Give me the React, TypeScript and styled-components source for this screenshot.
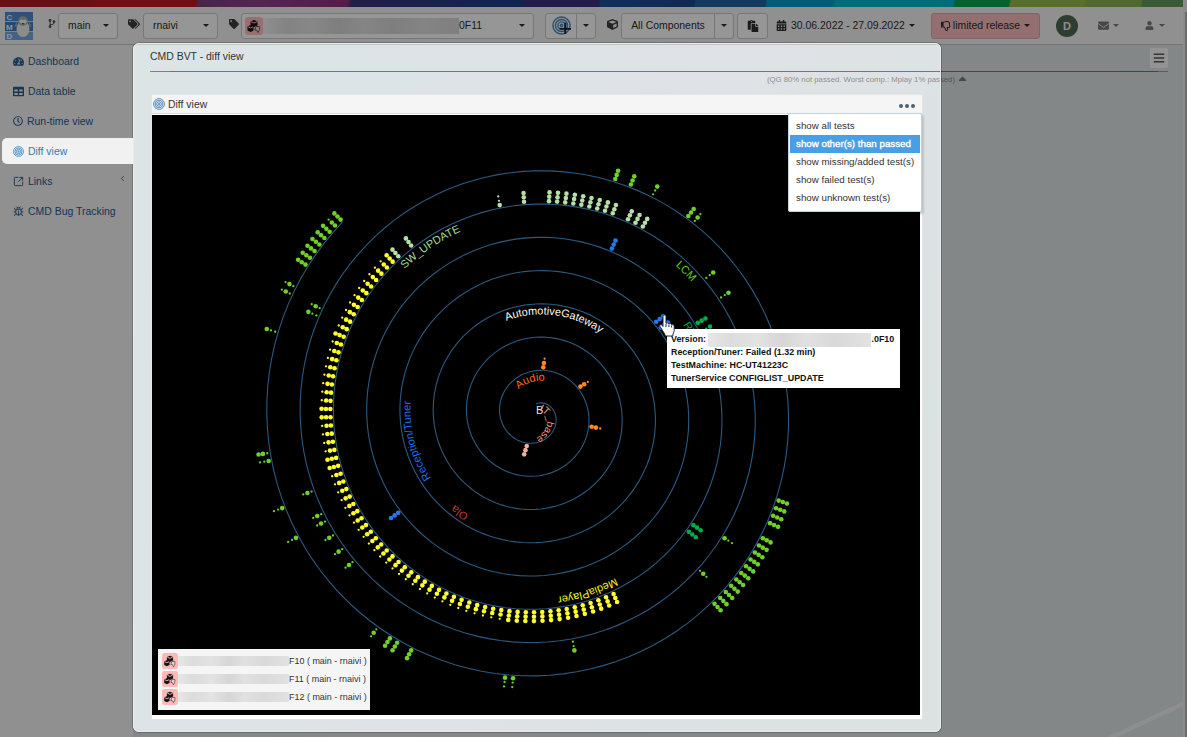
import React from 'react';
import styled, { createGlobalStyle, css } from 'styled-components';
import {
  FaBars,
  FaCalendarAlt,
  FaCaretDown,
  FaCaretUp,
  FaCodeBranch,
  FaCube,
  FaEnvelope,
  FaPaste,
  FaRegClock,
  FaRegThumbsDown,
  FaTable,
  FaTachometerAlt,
  FaTag,
  FaTags,
  FaUser,
} from 'react-icons/fa';
import { Bug, ChevronLeft, SquareArrowOutUpRight } from 'lucide-react';

const Global = createGlobalStyle`
  html, body { margin: 0; padding: 0; }
  body { font-family: "Liberation Sans", Arial, sans-serif; font-size: 10.45px; color: #333; overflow: hidden; }
  *, *::before, *::after { box-sizing: border-box; }
`;

const Page = styled.div`
  position: relative;
  display: flex;
  width: 1187px;
  height: 737px;
  overflow: hidden;
  background: #f0f0f0;
`;

const Screen = styled.div`
  display: flex;
  flex-direction: column;
  width: 1183px;
`;

const Strip = styled.div`
  flex: 0 0 7px;
  background: linear-gradient(
    100deg,
    #b01c25 0 92px, #c0161d 92px 193px, #7a3a78 196px, #8c3f8b 250px, #8c2f7a 343px,
    #3a3278 346px, #1a3f88 515px, #38307c 516px 590px, #1c4f9c 592px, #194886 684px,
    #1f639c 686px 754px, #009cc6 756px 821px, #00b4c8 823px 930px, #00b2dc 939px,
    #00a44c 941px 994px, #93b84a 996px 1068px, #85b053 1070px 1124px, #60945c 1126px
  );
`;

const Header = styled.header`
  display: flex;
  align-items: center;
  flex: 0 0 38px;
  padding-left: 5px;
  border-bottom: 1px solid #c4c4c4;
  background: #f0f0f0;
`;

const HeaderIcon = styled.span<{ $w: number; $ml?: number; $up?: number }>`
  display: flex;
  width: ${(p) => p.$w}px;
  margin-left: ${(p) => p.$ml ?? 0}px;
  padding-bottom: ${(p) => p.$up ?? 4}px;
  flex: none;
  color: #3c3c3c;
`;

const Button = styled.div<{ $w: number; $ml?: number; $tone?: 'danger' }>`
  display: flex;
  align-items: center;
  justify-content: space-between;
  flex: none;
  width: ${(p) => p.$w}px;
  height: 26px;
  margin-left: ${(p) => p.$ml ?? 0}px;
  padding: 0 8px 0 9px;
  border: 1px solid #c6c6c6;
  border-radius: 3px;
  color: #2c2c2c;
  background: #fbfbfb;
  white-space: nowrap;
  ${(p) =>
    p.$tone === 'danger' &&
    css`
      background: #f7b9b9;
      border-color: #cfa9a9;
      justify-content: center;
      gap: 2px;
      padding: 0;
    `}
`;

const SplitMain = styled.span<{ $w: number }>`
  display: flex;
  align-items: center;
  justify-content: center;
  width: ${(p) => p.$w}px;
  height: 24px;
  border-right: 1px solid #c6c6c6;
`;

const SplitButton = styled(Button)`
  padding: 0;
`;

const SplitCaret = styled.span`
  display: flex;
  flex: 1;
  justify-content: center;
`;

const Caret = styled.i`
  width: 0;
  height: 0;
  border: 3px solid transparent;
  border-top-color: currentColor;
  border-bottom: 0;
`;

const Smudge = styled.span<{ $w: number; $h: number; $dark?: boolean }>`
  flex: none;
  width: ${(p) => p.$w}px;
  height: ${(p) => p.$h}px;
  background: ${(p) =>
    p.$dark
      ? 'linear-gradient(90deg, #efefef, #dadada 12%, #e2e2e2 25%, #d2d2d2 38%, #dedede 52%, #d3d3d3 66%, #dcdcdc 82%, #d4d4d4)'
      : 'linear-gradient(90deg, #e6e6e6, #dcdcdc 14%, #e3e3e3 30%, #d6d6d6 46%, #e1e1e1 60%, #d9d9d9 78%, #e2e2e2)'};
`;

const VersionName = styled.span`
  display: flex;
  align-items: center;
  flex: 1;
  gap: 0;
`;

const DateRange = styled.div`
  display: flex;
  align-items: center;
  gap: 4px;
  margin-left: 8px;
  flex: none;
  width: 139px;
  color: #2c2c2c;
  white-space: nowrap;
`;

const Avatar = styled.div`
  display: flex;
  align-items: center;
  justify-content: center;
  flex: none;
  width: 22px;
  height: 22px;
  margin-left: 16px;
  border-radius: 50%;
  color: #e9e9e9;
  background: #4c6650;
  font-weight: bold;
  font-size: 11px;
`;

const UserTool = styled.div<{ $ml: number }>`
  display: flex;
  align-items: center;
  gap: 4px;
  margin-left: ${(p) => p.$ml}px;
  padding-bottom: 1px;
  color: #777;
`;

const Body = styled.div`
  display: flex;
  flex: 1;
  min-height: 0;
`;

const Sidebar = styled.nav`
  display: flex;
  flex-direction: column;
  flex: 0 0 133px;
  padding-top: 1px;
`;

const NavItem = styled.div<{ $active?: boolean }>`
  display: flex;
  align-items: center;
  height: 26px;
  margin: 2px 0 2px 2px;
  padding-left: 11px;
  gap: 4px;
  color: #245a8c;
  white-space: nowrap;
  svg { flex: none; }
  ${(p) =>
    p.$active &&
    css`
      position: relative;
      z-index: 5;
      color: #337ab7;
      background: #f1f1f1;
      border-radius: 5px 0 0 5px;
    `}
`;

const NavArrow = styled.span`
  display: flex;
  margin: 0 6px 5px auto;
`;

const Main = styled.main`
  flex: 1;
  min-width: 0;
  padding: 0 15px 0 17px;
  background:
    linear-gradient(155deg, transparent 97%, #e9edee 97% 97.4%, transparent 97.4%),
    linear-gradient(115deg, #dce4e6 0%, #dde3e6 30%, #dfe2e6 45%, #dbe2e2 70%, #dde2e3 100%);
`;

const TitleRow = styled.div`
  display: flex;
  align-items: flex-start;
  justify-content: space-between;
  height: 26px;
  padding-top: 3px;
`;

const Title = styled.h1`
  margin: 2px 0 0;
  font-size: 10.45px;
  line-height: 13px;
  font-weight: normal;
`;

const MenuButton = styled.div`
  display: flex;
  align-items: center;
  justify-content: center;
  width: 18px;
  height: 20px;
  border-radius: 2px;
  background: #f6f6f6;
  color: #555;
`;

const Gate = styled.div`
  display: flex;
  height: 1px;
  background: #999;
`;

const GatePart = styled.span<{ $w: number; $c: string }>`
  width: ${(p) => p.$w}px;
  background: ${(p) => p.$c};
`;

const GateNote = styled.div`
  display: flex;
  align-items: flex-start;
  justify-content: flex-end;
  width: 819px;
  height: 22px;
  gap: 1px;
  color: #8c8f91;
  font-size: 7.75px;
  line-height: 15px;
  white-space: nowrap;
  svg { color: #777; }
`;

const Card = styled.section`
  display: flex;
  flex-direction: column;
  width: 772px;
  height: 626px;
  margin-left: 1px;
  background: #fff;
  border: 1px solid #e4e6e6;
  border-radius: 2px;
`;

const CardHead = styled.div`
  position: relative;
  display: flex;
  align-items: center;
  gap: 3px;
  flex: 0 0 19px;
  padding: 0 7px 0 1px;
  border-bottom: 1px solid #ddd;
  background: #f5f5f5;
`;

const Dots = styled.span`
  display: flex;
  gap: 2px;
  margin: 3px 0 0 auto;
  i { width: 4px; height: 4px; border-radius: 50%; background: #4d6070; }
`;

const Plot = styled.div`
  position: relative;
  width: 768px;
  height: 600px;
  margin-top: 1px;
  background: #000;
  > svg { display: block; }
`;

const Menu = styled.div`
  position: absolute;
  top: 18px;
  right: 0;
  z-index: 3;
  width: 134px;
  height: 99px;
  padding: 3px 1px;
  border: 1px solid #c3d4e0;
  border-radius: 2px;
  background: #fff;
  box-shadow: 1px 2px 3px rgba(0, 0, 0, 0.25);
`;

const MenuItem = styled.div<{ $on?: boolean }>`
  height: 18px;
  padding-left: 6px;
  font-size: 9.75px;
  line-height: 18px;
  white-space: nowrap;
  color: ${(p) => (p.$on ? '#fff' : '#333')};
  background: ${(p) => (p.$on ? '#489ee7' : 'transparent')};
  -webkit-text-stroke: ${(p) => (p.$on ? '0.35px #fff' : '0')};
`;

const Tooltip = styled.div`
  position: absolute;
  left: 515px;
  top: 214px;
  width: 233px;
  height: 59px;
  padding: 4px 0 0 4px;
  background: #fff;
  color: #111;
  font-size: 8.9px;
  font-weight: bold;
  line-height: 13px;
  white-space: nowrap;
`;

const TooltipLine = styled.div`
  display: flex;
  align-items: center;
  height: 13px;
`;

const Pointer = styled.svg`
  position: absolute;
  left: 507px;
  top: 199px;
`;

const Legend = styled.div`
  position: absolute;
  left: 6px;
  bottom: 5px;
  width: 212px;
  height: 61px;
  padding: 3px 0 0 4px;
  background: #f5f5f5;
  font-size: 8.96px;
`;

const LegendRow = styled.div`
  display: flex;
  align-items: center;
  height: 18px;
  white-space: nowrap;
`;

const Spotlight = styled.div`
  position: absolute;
  left: 133px;
  top: 43px;
  width: 808px;
  height: 689px;
  z-index: 4;
  border: 1px solid #e9eaea;
  border-radius: 6px;
  box-shadow: 0 0 0 1px rgba(0, 0, 0, 0.2), 0 0 0 1300px rgba(0, 0, 0, 0.4);
  pointer-events: none;
`;

const Scrollbar = styled.div`
  width: 4px;
  padding-top: 12px;
  background: #e8e8e8;
  &::after { content: ''; display: block; width: 2px; height: 725px; margin-left: 2px; background: #b5b5b5; }
`;

/* ---- Spiral geometry ---- */

const CX = 384;
const CY = 300;
const R0 = 11.1;
const PITCH = 33.3;
const OX = 153;
const OY = 115;

type Point = [number, number];

const lineRadius = (deg: number) => R0 + (PITCH * deg) / 360;

const polar = (deg: number, r: number): Point => {
  const a = (deg * Math.PI) / 180;
  return [CX + r * Math.sin(a), CY - r * Math.cos(a)];
};

const spiralPath = (from: number, to: number, inset = 0) => {
  const pts: string[] = [];
  for (let d = from; d <= to; d += 3) {
    const [x, y] = polar(d, lineRadius(d) - inset);
    pts.push(`${x.toFixed(2)} ${y.toFixed(2)}`);
  }
  return `M${pts.join('L')}`;
};

/* Unwraps a point into its total angle along the spiral. */
const unwrap = ([x, y]: Point) => {
  const dx = x - OX - CX;
  const dy = y - OY - CY;
  const deg = ((Math.atan2(dx, -dy) * 180) / Math.PI + 360) % 360;
  const turn = Math.round((Math.hypot(dx, dy) - 3 - R0) / PITCH - deg / 360);
  return deg + turn * 360;
};

interface Run {
  color: string;
  from: Point;
  to?: Point;
  /* each column lists its dots from the line outwards: L large, s small */
  cols: [string, number][];
}

const GREEN = '#6fd02c';
const PALE = '#b5e0a8';
const YELLOW = '#ffff2e';
const BLUE = '#1e7df5';
const ORANGE = '#ff8c1a';
const EMERALD = '#00ad48';
const PINK = '#f0b09a';

const one = (color: string, x: number, y: number, code = 'LLL'): Run => ({
  color,
  from: [x, y],
  cols: [[code, 1]],
});

const runs: Run[] = [
  {
    color: YELLOW,
    from: [614.7, 594.3],
    to: [393.3, 261.3],
    cols: [
      ['LLL', 14], ['LLs', 28], ['LLL', 2], ['LLs', 4], ['LLL', 2],
      ['LLs', 8], ['LLL', 1], ['LLs', 10], ['LLL', 1],
    ],
  },
  { color: PALE, from: [550, 201], to: [614, 212.7], cols: [['LLL', 9]] },
  { color: PALE, from: [629, 219.3], to: [644, 226.3], cols: [['LLL', 3]] },
  { color: GREEN, from: [780, 500.7], to: [771.3, 523.3], cols: [['LLL', 4]] },
  { color: GREEN, from: [764, 538.3], to: [715.7, 604], cols: [['LLL', 11]] },
  { color: GREEN, from: [306, 264.3], to: [341.3, 219.3], cols: [['LLL', 6], ['LLs', 1], ['LLL', 1]] },
  one(PALE, 399, 256),
  one(PALE, 412, 245.3),
  one(PALE, 500.7, 205, 'Lss'),
  one(PALE, 525, 201.3),
  one(GREEN, 616.3, 179),
  one(GREEN, 632, 184.3),
  one(GREEN, 654.3, 194, 'ssL'),
  one(GREEN, 689.3, 216),
  one(GREEN, 696, 220.7, 'sLs'),
  one(GREEN, 707.7, 277.7, 'ssL'),
  one(GREEN, 722.3, 297.3, 'ssL'),
  one(EMERALD, 699, 322.7),
  one(EMERALD, 703.7, 330.3, 'ssL'),
  one(EMERALD, 694.7, 525.3),
  one(EMERALD, 690, 532),
  one(BLUE, 613, 248.3),
  one(BLUE, 657.3, 321.7),
  one(BLUE, 662, 327.3),
  one(BLUE, 399, 513),
  one(ORANGE, 544.3, 367.3, 'LLs'),
  one(ORANGE, 581.3, 386.7, 'LLs'),
  one(ORANGE, 592.7, 426.7, 'LLs'),
  one(PINK, 527.7, 446),
  one(GREEN, 725.7, 538.3, 'Lss'),
  one(GREEN, 701.3, 571, 'sLs'),
  one(GREEN, 574, 642, 'ssL'),
  one(GREEN, 268, 453.3, 'sLL'),
  one(GREEN, 269.3, 461, 'Lss'),
  one(GREEN, 312.3, 491.7, 'sLs'),
  one(GREEN, 322, 514.3, 'sLs'),
  one(GREEN, 325.7, 521.7, 'sLs'),
  one(GREEN, 333.7, 535.7, 'sLs'),
  one(GREEN, 343, 549.3, 'sLs'),
  one(GREEN, 353.3, 562.3, 'sLs'),
  one(GREEN, 282.7, 508.3, 'Lss'),
  one(GREEN, 296.7, 538, 'Lss'),
  one(GREEN, 377, 629.7, 'sLs'),
  one(GREEN, 390.7, 638.7),
  one(GREEN, 398, 643),
  one(GREEN, 412, 650.7),
  one(GREEN, 506, 678, 'Lss'),
  one(GREEN, 514, 678.7, 'Lss'),
  one(GREEN, 294, 286, 'sLs'),
  one(GREEN, 290.3, 293.3, 'sLs'),
  one(GREEN, 320.3, 308, 'sLs'),
  one(GREEN, 317, 315.3, 'ssL'),
  one(GREEN, 276, 331.7, 'ssL'),
];

const labels = [
  { text: 'Audio', at: 326, color: '#ff6a1a' },
  { text: 'AutomotiveGateway', at: 1062.5, color: '#fffbe8' },
  { text: 'Ola', at: 1294, color: '#c0392b' },
  { text: 'Reception/Tuner', at: 1319, color: '#1e6ff5' },
  { text: 'RVC', at: 1858.5, color: '#00a040' },
  { text: 'MediaPlayer', at: 1954, color: '#f4f41e' },
  { text: 'SW_UPDATE', at: 2118, color: '#a6dc9c' },
  { text: 'LCM', at: 2203, color: '#5fd02c' },
];

const RunDots = ({ run }: { run: Run }) => {
  const codes = run.cols.flatMap(([code, n]) => Array<string>(n).fill(code));
  const a = lineRadius(unwrap(run.from));
  const b = run.to ? lineRadius(unwrap(run.to)) : a;
  return (
    <g fill={run.color}>
      {codes.map((code, i) => {
        const t = codes.length > 1 ? i / (codes.length - 1) : 0;
        const r = Math.sqrt(a * a + (b * b - a * a) * t);
        const deg = ((r - R0) / PITCH) * 360;
        return code.split('').map((size, k) => {
          const [x, y] = polar(deg, r + 3 + k * 4.4);
          return <circle key={`${i}-${k}`} cx={x} cy={y} r={size === 'L' ? 2.3 : 1.15} />;
        });
      })}
    </g>
  );
};

const Spiral = () => (
  <svg width="768" height="600" viewBox="0 0 768 600">
    <path d={spiralPath(0, 2835)} fill="none" stroke="#2d5a80" strokeWidth="1.1" />
    {runs.map((run, i) => (
      <RunDots key={i} run={run} />
    ))}
    <g fontFamily="Liberation Sans, Arial, sans-serif" fontSize="11">
      {labels.map((l) => (
        <React.Fragment key={l.text}>
          <path id={`arc-${l.at}`} d={spiralPath(l.at, l.at + 180, 10.5)} fill="none" />
          <text fill={l.color}>
            <textPath href={`#arc-${l.at}`}>{l.text}</textPath>
          </text>
        </React.Fragment>
      ))}
      <text x="384" y="299" fill="#e8e0e0">B</text>
      <path id="arc-base" d="M387 295 Q397 300 395 308 Q393 317 386 322" fill="none" />
      <text fill="#f0a08c" fontSize="10">
        <textPath href="#arc-base">IT_base</textPath>
      </text>
    </g>
  </svg>
);

const Swirl = ({ size, plus }: { size: number; plus?: boolean }) => (
  <svg width={size} height={size} viewBox="0 0 20 20" fill="none" stroke="#3f83bd" strokeWidth="1.5">
    <circle cx="10" cy="10" r="9" />
    <circle cx="10" cy="10" r="6.4" />
    <circle cx="10" cy="10" r="3.8" />
    <circle cx="10" cy="10" r="1.3" />
    {plus && <path d="M14 7v12M8 13.5h12" stroke="#222" strokeWidth="2" />}
  </svg>
);

const CubesBadge = ({ size }: { size: number }) => (
  <svg width={size} height={size} viewBox="0 0 18 18" style={{ flex: 'none' }}>
    <rect width="18" height="18" rx="3" fill="#ffb9b9" />
    <path d="M9 3l3.5 1.5v4L9 10 5.500 8.500v-4zM5.500 8l3 1.500v4L5.500 15l-3-1.500v-4z" fill="#151515" />
    <path d="M6 4.700l3 1.300 3-1.300M3 9.800l2.500 1.100 2.500-1.100" stroke="#ffb9b9" fill="none" />
    <path d="M11 9.500h3.500v3l-1.500 3-1.500-2.500H10z" fill="#ffc9c9" stroke="#444" strokeWidth=".8" />
  </svg>
);

const Logo = () => (
  <svg width="28" height="28" viewBox="0 0 28 28">
    <rect width="28" height="28" fill="#4f86cf" />
    <rect y="10" width="28" height="9" fill="#3f78c6" />
    <rect y="20" width="28" height="8" fill="#74a2dd" />
    <path d="M0 9.500h28M0 19.500h28" stroke="#c9daf0" />
    <path d="M12 9l-3 6 3-1zM24 9l3 6-3-1z" fill="#9fa39a" />
    <ellipse cx="18" cy="17" rx="6.500" ry="8" fill="#e9ebe4" />
    <circle cx="18" cy="9" r="4.800" fill="#a9ada4" />
    <circle cx="16.300" cy="9.500" r="2.100" fill="#f0f0ea" />
    <circle cx="19.700" cy="9.500" r="2.100" fill="#f0f0ea" />
    <path d="M16.500 11h3l-1.500 2z" fill="#555" />
    <g fontFamily="Liberation Sans, Arial, sans-serif" fontSize="8" fontWeight="bold" fill="#eef3fa">
      <text x="1.500" y="7.500">C</text>
      <text x="1" y="17.500">M</text>
      <text x="1.500" y="27">D</text>
    </g>
  </svg>
);

const HandPointer = () => (
  <Pointer width="17" height="24" viewBox="0 0 17 24">
    <path
      d="M4 2.500c0-2 3-2 3 0v7c.5-1 2.700-.9 2.900.5.700-.8 2.500-.5 2.700.8.900-.5 2.600-.1 2.600 1.500v4c0 2-1.400 3-1.400 5.700H6.300C6 19.500 4.500 18.500 3.500 16.500L1 12.500c-.8-1.700 1-2.600 2-1.300l1 1.300z"
      fill="#fff"
      stroke="#1c2240"
      strokeWidth="1"
    />
    <path d="M7 10v3M9.900 10.500V13M12.600 11.500v2" stroke="#1c2240" />
  </Pointer>
);

export default function App() {
  return (
    <Page>
      <Global />
      <Screen>
        <Strip />
        <Header>
          <Logo />
          <HeaderIcon $w={8} $ml={15}><FaCodeBranch size={9} /></HeaderIcon>
          <Button $w={60} $ml={2}>main <Caret /></Button>
          <HeaderIcon $w={13} $ml={10}><FaTags size={12} /></HeaderIcon>
          <Button $w={75} $ml={2}>rnaivi <Caret /></Button>
          <HeaderIcon $w={10} $ml={11}><FaTag size={10} /></HeaderIcon>
          <Button $w={293} $ml={2} style={{ paddingLeft: 3 }}>
            <VersionName>
              <CubesBadge size={18} />
              <Smudge $w={196} $h={16} $dark />
              0F11
            </VersionName>
            <Caret />
          </Button>
          <SplitButton $w={51} $ml={11}>
            <SplitMain $w={31}><Swirl size={19} plus /></SplitMain>
            <SplitCaret><Caret /></SplitCaret>
          </SplitButton>
          <HeaderIcon $w={11} $ml={11} $up={2}><FaCube size={11} /></HeaderIcon>
          <SplitButton $w={113} $ml={3}>
            <SplitMain $w={93}>All Components</SplitMain>
            <SplitCaret><Caret /></SplitCaret>
          </SplitButton>
          <Button $w={31} $ml={3}><FaPaste size={12} /></Button>
          <DateRange>
            <FaCalendarAlt size={11} />
            30.06.2022 - 27.09.2022
            <Caret />
          </DateRange>
          <Button $w={109} $ml={16} $tone="danger">
            <FaRegThumbsDown size={10} />
            limited release
            <Caret style={{ marginLeft: 2 }} />
          </Button>
          <Avatar>D</Avatar>
          <UserTool $ml={20}><FaEnvelope size={11} /><Caret /></UserTool>
          <UserTool $ml={26}><FaUser size={9} /><Caret style={{ marginLeft: 1 }} /></UserTool>
        </Header>
        <Body>
          <Sidebar>
            <NavItem><FaTachometerAlt size={11} />Dashboard</NavItem>
            <NavItem><FaTable size={11} />Data table</NavItem>
            <NavItem><FaRegClock size={10} />Run-time view</NavItem>
            <NavItem $active><Swirl size={11} />Diff view</NavItem>
            <NavItem>
              <SquareArrowOutUpRight size={11} />Links
              <NavArrow><ChevronLeft size={9} /></NavArrow>
            </NavItem>
            <NavItem><Bug size={11} />CMD Bug Tracking</NavItem>
          </Sidebar>
          <Main>
            <TitleRow>
              <Title>CMD BVT - diff view</Title>
              <MenuButton><FaBars size={12} /></MenuButton>
            </TitleRow>
            <Gate>
              <GatePart $w={20} $c="#1fc41f" />
              <GatePart $w={947} $c="#dd4b45" />
              <GatePart $w={41} $c="#4f74c8" />
            </Gate>
            <GateNote>
              (QG 80% not passed. Worst comp.: Mplay 1% passed)
              <FaCaretUp size={13} />
            </GateNote>
            <Card>
              <CardHead>
                <Swirl size={12} />
                Diff view
                <Dots><i /><i /><i /></Dots>
                <Menu>
                  <MenuItem>show all tests</MenuItem>
                  <MenuItem $on>show other(s) than passed</MenuItem>
                  <MenuItem>show missing/added test(s)</MenuItem>
                  <MenuItem>show failed test(s)</MenuItem>
                  <MenuItem>show unknown test(s)</MenuItem>
                </Menu>
              </CardHead>
              <Plot>
                <Spiral />
                <Tooltip>
                  <TooltipLine>Version:&nbsp;<Smudge $w={163} $h={14} />.0F10</TooltipLine>
                  <TooltipLine>Reception/Tuner: Failed (1.32 min)</TooltipLine>
                  <TooltipLine>TestMachine: HC-UT41223C</TooltipLine>
                  <TooltipLine>TunerService CONFIGLIST_UPDATE</TooltipLine>
                </Tooltip>
                <HandPointer />
                <Legend>
                  {['F10', 'F11', 'F12'].map((v) => (
                    <LegendRow key={v}>
                      <CubesBadge size={16} />
                      <Smudge $w={111} $h={10} />
                      {v} ( main - rnaivi )
                    </LegendRow>
                  ))}
                </Legend>
              </Plot>
            </Card>
          </Main>
        </Body>
      </Screen>
      <Scrollbar />
      <Spotlight />
    </Page>
  );
}
